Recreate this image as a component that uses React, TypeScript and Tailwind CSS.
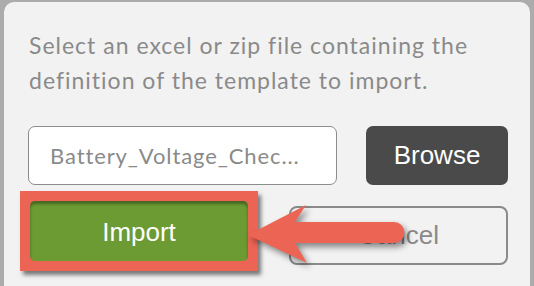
import React from 'react';

const Arrow: React.FC = () => (
  <svg
    className="absolute left-0 top-0 pointer-events-none"
    width="534"
    height="286"
    viewBox="0 0 534 286"
    style={{ filter: 'drop-shadow(3px 4px 3px rgba(0,0,0,0.45))' }}
  >
    <path
      d="M248 235 L306 205 L295 222 L394 222 A10.5 10.5 0 0 1 394 243 L295 243 L307 263 Z"
      fill="#ec6454"
    />
  </svg>
);

const App: React.FC = () => {
  return (
    <div className="relative w-[534px] h-[286px] overflow-hidden bg-[#acacac] pt-[2px] pl-[4px] pr-[4px]">
      <div className="h-full bg-[#f2f2f2] rounded-t-[10px] pl-[24px] pr-[22px] pt-[26px]">
        <p className="pl-[1px] text-[23px] leading-[35px] tracking-[1px] text-[#8a8a8a] font-['Lato',sans-serif]">
          Select an excel or zip file containing the
          <br />
          definition of the template to import.
        </p>

        <div className="mt-[28px] flex items-center justify-between">
          <div className="w-[309px] h-[59px] rounded-[7px] border-[1.5px] border-[#8c8c8c] bg-white flex items-center pl-[21px]">
            <span className="text-[22px] tracking-[0.9px] text-[#8a8a8a] font-['Lato',sans-serif]">Battery_Voltage_Chec...</span>
          </div>
          <button className="w-[142px] h-[59px] rounded-[7px] bg-[#4a4a4a] text-white text-[26px] font-['Liberation_Sans',Arial,sans-serif]">
            Browse
          </button>
        </div>

        <div className="mt-[6px] flex items-start justify-between">
          <div className="-ml-[8px] w-[238px] h-[80px] border-[10px] border-[#ec6454] shadow-[3px_4px_4px_rgba(0,0,0,0.5)] bg-[#ec6454]">
            <button className="w-full h-full pt-[3px] rounded-[5px] bg-[#6c9b33] shadow-[inset_0_3px_3px_rgba(0,0,0,0.35)] text-white text-[26px] font-['Liberation_Sans',Arial,sans-serif]">
              Import
            </button>
          </div>
          <button className="mt-[15px] w-[219px] h-[59px] rounded-[8px] border-2 border-[#8a8a8a] text-[#8a8a8a] text-[26px] font-['Liberation_Sans',Arial,sans-serif]">
            Cancel
          </button>
        </div>
      </div>
      <Arrow />
    </div>
  );
};

export default App;
